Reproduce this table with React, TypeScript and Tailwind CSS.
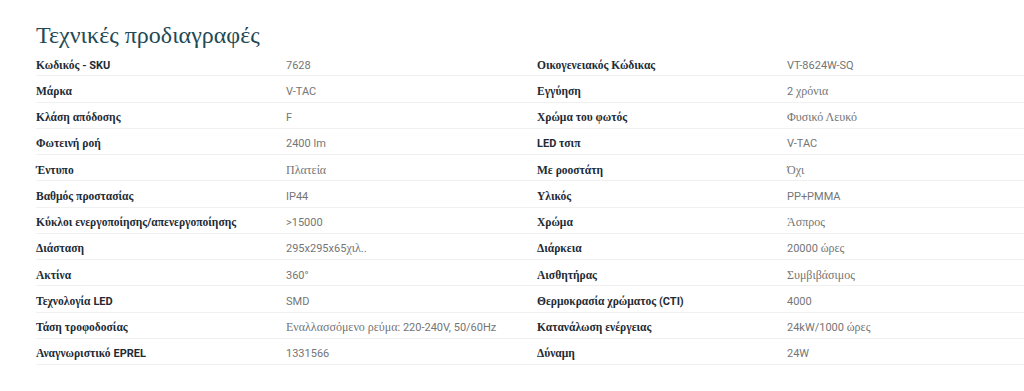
import React from "react";

const GREEK = /([\u0370-\u03FF\u1F00-\u1FFF][\u0370-\u03FF\u1F00-\u1FFF\s]*)/;

function Mixed({ text, bold }: { text: string; bold?: boolean }) {
  const parts = text.split(GREEK).filter((p) => p !== "");
  return (
    <>
      {parts.map((p, i) =>
        GREEK.test(p) ? (
          <span key={i} className={`font-['Liberation_Serif',serif] ${bold ? "font-bold text-[11.5px]" : "font-normal text-[12px]"}`}>
            {p}
          </span>
        ) : (
          <span key={i} className={`font-['Roboto',sans-serif] text-[11px] ${bold ? "font-bold" : "font-normal"}`}>
            {p}
          </span>
        )
      )}
    </>
  );
}

const left: [string, string][] = [
  ["Κωδικός - SKU", "7628"],
  ["Μάρκα", "V-TAC"],
  ["Κλάση απόδοσης", "F"],
  ["Φωτεινή ροή", "2400 lm"],
  ["Έντυπο", "Πλατεία"],
  ["Βαθμός προστασίας", "IP44"],
  ["Κύκλοι ενεργοποίησης/απενεργοποίησης", ">15000"],
  ["Διάσταση", "295x295x65χιλ.."],
  ["Ακτίνα", "360°"],
  ["Τεχνολογία LED", "SMD"],
  ["Τάση τροφοδοσίας", "Εναλλασσόμενο ρεύμα: 220-240V, 50/60Hz"],
  ["Αναγνωριστικό EPREL", "1331566"],
];

const right: [string, string][] = [
  ["Οικογενειακός Κώδικας", "VT-8624W-SQ"],
  ["Εγγύηση", "2 χρόνια"],
  ["Χρώμα του φωτός", "Φυσικό Λευκό"],
  ["LED τσιπ", "V-TAC"],
  ["Με ροοστάτη", "Όχι"],
  ["Υλικός", "PP+PMMA"],
  ["Χρώμα", "Άσπρος"],
  ["Διάρκεια", "20000 ώρες"],
  ["Αισθητήρας", "Συμβιβάσιμος"],
  ["Θερμοκρασία χρώματος (CTI)", "4000"],
  ["Κατανάλωση ενέργειας", "24kW/1000 ώρες"],
  ["Δύναμη", "24W"],
];

function Table({ rows }: { rows: [string, string][] }) {
  return (
    <div className="flex flex-col">
      {rows.map(([k, v]) => (
        <div key={k} className="flex items-center h-[26.25px] border-b border-[#f0f0f0]">
          <div className="w-[250px] shrink-0 text-[#1d2b36] whitespace-nowrap">
            <Mixed text={k} bold />
          </div>
          <div className="text-[#757575] whitespace-nowrap">
            <Mixed text={v} />
          </div>
        </div>
      ))}
    </div>
  );
}

export default function App() {
  return (
    <div className="w-[1024px] h-[391px] bg-white pl-[36px] pt-[20px] overflow-hidden">
      {/* TITLE */}
      <h1 className="font-['Liberation_Serif',serif] text-[24px] leading-[30px] text-[#1f4a56]">
        Τεχνικές προδιαγραφές
      </h1>

      {/* SPEC TABLES */}
      <div className="flex">
        <div className="w-[501px] shrink-0">
          <Table rows={left} />
        </div>
        <div className="flex-1">
          <Table rows={right} />
        </div>
      </div>
    </div>
  );
}
